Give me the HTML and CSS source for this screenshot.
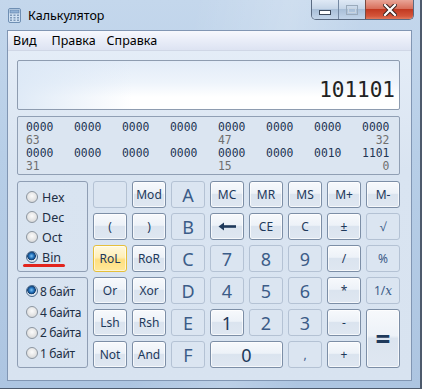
FILE: index.html
```html
<!DOCTYPE html>
<html lang="ru">
<head>
<meta charset="utf-8">
<title>Калькулятор</title>
<link rel="stylesheet" href="styles.css">
</head>
<body>
<div class="window">
  <div class="titlebar">
    <svg class="app-icon" width="14" height="15" viewBox="0 0 14 15">
      <rect x="0.5" y="0.5" width="12" height="14" rx="1.5" fill="#cfe0f2" stroke="#6f8fb3"/>
      <rect x="2" y="2" width="9" height="3" fill="#8fb0d4" stroke="#5b7ea6" stroke-width="0.6"/>
      <g fill="#7d98b8">
        <rect x="2" y="6.5" width="2" height="1.5"/><rect x="5.5" y="6.5" width="2" height="1.5"/><rect x="9" y="6.5" width="2" height="1.5"/>
        <rect x="2" y="9" width="2" height="1.5"/><rect x="5.5" y="9" width="2" height="1.5"/><rect x="9" y="9" width="2" height="1.5"/>
        <rect x="2" y="11.5" width="2" height="1.5"/><rect x="5.5" y="11.5" width="2" height="1.5"/><rect x="9" y="11.5" width="2" height="1.5"/>
      </g>
    </svg>
    <span class="title">Калькулятор</span>
    <div class="caption">
      <div class="cap cap-min">
        <svg width="12" height="5" viewBox="0 0 12 5"><rect x="0.5" y="0.5" width="11" height="4" fill="#fff" stroke="#3d4a5c"/></svg>
      </div>
      <div class="cap cap-max">
        <svg width="12" height="10" viewBox="0 0 12 10"><rect x="0.5" y="0.5" width="11" height="9" fill="none" stroke="#9aaabb"/><rect x="2.5" y="3.5" width="7" height="4" fill="none" stroke="#c9d4e0"/></svg>
      </div>
      <div class="cap cap-close">
        <svg width="14" height="12" viewBox="0 0 14 12"><path d="M2 1 L12 11 M12 1 L2 11" stroke="#3a2320" stroke-width="4.2" stroke-linecap="square"/><path d="M2 1 L12 11 M12 1 L2 11" stroke="#fff" stroke-width="2.2" stroke-linecap="square"/></svg>
      </div>
    </div>
  </div>
  <div class="client">
    <div class="menubar">
      <span class="menu-item">Вид</span>
      <span class="menu-item">Правка</span>
      <span class="menu-item">Справка</span>
    </div>
    <div class="body">
      <div class="display">101101</div>
      <div class="binary"><pre class="bits">0000   0000   0000   0000   0000   0000   0000   0000</pre><pre class="pos">63                          47                     32</pre><pre class="bits">0000   0000   0000   0000   0000   0000   0010   1101</pre><pre class="pos">31                          15                      0</pre></div>
      <div class="lower">
        <div class="panels">
          <div class="panel panel-base">
            <label class="radio"><span class="dot"></span>Hex</label>
            <label class="radio"><span class="dot"></span>Dec</label>
            <label class="radio"><span class="dot"></span>Oct</label>
            <label class="radio"><span class="dot on"></span>Bin</label>
            <span class="mark"></span>
          </div>
          <div class="panel panel-size">
            <label class="radio"><span class="dot on"></span>8 байт</label>
            <label class="radio"><span class="dot"></span>4 байта</label>
            <label class="radio"><span class="dot"></span>2 байта</label>
            <label class="radio"><span class="dot"></span>1 байт</label>
          </div>
        </div>
        <div class="keys">
          <div class="key off"></div>
          <div class="key">Mod</div>
          <div class="key off big">A</div>
          <div class="key">MC</div>
          <div class="key">MR</div>
          <div class="key">MS</div>
          <div class="key">M+</div>
          <div class="key">M-</div>

          <div class="key">(</div>
          <div class="key">)</div>
          <div class="key off big">B</div>
          <div class="key"><svg width="19" height="9" viewBox="0 0 19 9"><path d="M5 4.5 H18" stroke="#1e395b" stroke-width="2.6"/><path d="M0.5 4.5 L6 0.5 L6 8.5 Z" fill="#1e395b"/></svg></div>
          <div class="key">CE</div>
          <div class="key">C</div>
          <div class="key">±</div>
          <div class="key off">√</div>

          <div class="key hot">RoL</div>
          <div class="key">RoR</div>
          <div class="key off big">C</div>
          <div class="key off big">7</div>
          <div class="key off big">8</div>
          <div class="key off big">9</div>
          <div class="key">/</div>
          <div class="key off">%</div>

          <div class="key">Or</div>
          <div class="key">Xor</div>
          <div class="key off big">D</div>
          <div class="key off big">4</div>
          <div class="key off big">5</div>
          <div class="key off big">6</div>
          <div class="key">*</div>
          <div class="key off">1/<i class="ix">x</i></div>

          <div class="key">Lsh</div>
          <div class="key">Rsh</div>
          <div class="key off big">E</div>
          <div class="key big">1</div>
          <div class="key off big">2</div>
          <div class="key off big">3</div>
          <div class="key">-</div>
          <div class="key eq">=</div>

          <div class="key">Not</div>
          <div class="key">And</div>
          <div class="key off big">F</div>
          <div class="key big zero">0</div>
          <div class="key off">,</div>
          <div class="key">+</div>
        </div>
      </div>
    </div>
  </div>
</div>
</body>
</html>
```

FILE: styles.css
```css
* { box-sizing: border-box; }
html, body { margin: 0; padding: 0; }
body {
  width: 422px;
  height: 389px;
  overflow: hidden;
  font-family: "Noto Sans", "Open Sans", sans-serif;
  background: #fff;
}
.window {
  width: 422px;
  height: 389px;
  display: flex;
  flex-direction: column;
  padding: 0 8px 7px 7px;
  background:
    linear-gradient(100deg, rgba(255,255,255,0) 40%, rgba(255,255,255,0.18) 60%, rgba(255,255,255,0) 75%),
    linear-gradient(#c4d7ec, #b7cee7 40%, #adc5e1);
  border-right: 2px solid #4d5a6c;
  border-bottom: 1px solid #4d5a6c;
}
.titlebar {
  height: 30px;
  flex: none;
  display: flex;
  align-items: flex-start;
}
.app-icon { margin: 8px 0 0 1px; flex: none; }
.title {
  margin: 7px 0 0 6px;
  font-size: 12.5px;
  color: #000;
}
.caption {
  margin-left: auto;
  margin-right: -2px;
  display: flex;
  height: 20px;
  border: 1px solid #5a6b82;
  border-top: none;
  border-radius: 0 0 5px 5px;
  overflow: hidden;
}
.cap {
  height: 19px;
  display: flex;
  align-items: center;
  justify-content: center;
}
.cap-min {
  width: 27px;
  background: linear-gradient(#dfe9f5, #c6d6e8 45%, #a9bfd8 50%, #c3d5ea);
  border-right: 1px solid #7488a2;
  align-items: flex-end;
  padding-bottom: 4px;
}
.cap-max {
  width: 27px;
  background: linear-gradient(#dfe9f5, #c6d6e8 45%, #a9bfd8 50%, #c3d5ea);
  border-right: 1px solid #7a4a40;
}
.cap-close {
  width: 47px;
  background: linear-gradient(#e9a597, #d8705c 45%, #c23a22 50%, #d4553a 85%, #e07a5e);
}
.client {
  flex: 1;
  display: flex;
  flex-direction: column;
  border: 1px solid #8196b3;
  background: linear-gradient(#e6eef8, #d9e4f1 40%, #d8e3f0);
}
.menubar {
  height: 20px;
  flex: none;
  display: flex;
  align-items: center;
  padding-left: 5px;
  background: linear-gradient(#f7f8fd, #e9edf8 50%, #dde3f2);
  border-bottom: 1px solid #d0d7e6;
}
.menu-item {
  font-size: 12.5px;
  color: #000;
  line-height: 18px;
}
.menu-item:nth-child(1) { margin-right: 15px; }
.menu-item:nth-child(2) { margin-right: 11px; }
.body {
  flex: 1;
  padding: 9px 11px 0 9px;
  display: flex;
  flex-direction: column;
  gap: 6px;
}
.display {
  height: 50px;
  border: 1px solid #8e9cb0;
  border-radius: 2px;
  background:
    linear-gradient(90deg, rgba(220,232,246,0.9), rgba(255,255,255,0) 30%),
    linear-gradient(#e3ecf8, #eef4fb 45%, #fff 75%);
  font-family: "DejaVu Sans Mono", monospace;
  font-size: 21px;
  color: #222;
  text-align: right;
  padding: 16px 4px 0 0;
  line-height: 26px;
}
.binary {
  height: 59px;
  border: 1px solid #909fb4;
  border-radius: 2px;
  background: #dbe5f1;
  padding: 4px 0 0 8px;
}
.binary pre {
  margin: 0;
  font-family: "DejaVu Sans Mono", monospace;
  font-size: 11.4px;
  line-height: 13px;
  height: 13px;
}
.bits { color: #1f3554; }
.pos { color: #6f6f6f; }
.lower {
  display: flex;
  gap: 5px;
  height: 187px;
}
.panels {
  width: 73px;
  display: flex;
  flex-direction: column;
  gap: 5px;
}
.panel {
  position: relative;
  height: 91px;
  border: 1px solid #8f9eb4;
  border-radius: 3px;
  padding-left: 8px;
  display: flex;
  flex-direction: column;
}
.panel-base { padding-top: 5px; }
.panel-size { padding-top: 3px; }
.panel-base .radio { height: 20px; gap: 4px; font-size: 12.5px; }
.panel-size .radio { height: 20.7px; gap: 2px; font-size: 12px; letter-spacing: -0.35px; }
.radio {
  display: flex;
  align-items: center;
  color: #1e2f45;
  white-space: nowrap;
}
.dot {
  width: 12px;
  height: 12px;
  border-radius: 50%;
  border: 1px solid #8d96a0;
  background: radial-gradient(circle at 50% 40%, #fbfbfb, #e4e4e4 55%, #c9ccd0);
  flex: none;
}
.dot.on {
  border-color: #4b6a8c;
  background: radial-gradient(circle at 45% 40%, #7fc4f5 0, #1f6cb6 2.5px, #163e6c 4px, #d7e0ea 4.6px, #eef2f6 100%);
}
.mark {
  position: absolute;
  left: 5px;
  top: 82px;
  width: 42px;
  height: 3px;
  border-radius: 2px;
  background: #e2241d;
}
.keys {
  width: 307px;
  display: grid;
  grid-template-columns: repeat(8, 34px);
  grid-template-rows: repeat(6, 27px);
  gap: 5px;
}
.key {
  border: 1px solid #7c8ea6;
  border-radius: 3px;
  background: linear-gradient(#f7f9fc, #edf2f8 45%, #dbe4ef 50%, #dfe7f1);
  box-shadow: inset 0 0 0 1px rgba(255,255,255,0.7);
  display: flex;
  align-items: center;
  justify-content: center;
  font-size: 12px;
  color: #1e395b;
  line-height: 1;
}
.key.off {
  border-color: #b4c2d4;
  background: #dbe5f1;
  box-shadow: none;
  color: #3b5c88;
}
.key.big { font-size: 18px; }
.key.hot {
  border-color: #e5bf3b;
  background: linear-gradient(#fff8dc, #ffefb8 45%, #ffdf80 55%, #ffe89a);
  box-shadow: inset 0 0 0 1px rgba(255,255,255,0.6);
  color: #1e395b;
}
.key.eq {
  grid-row: span 2;
  font-size: 26px;
  font-weight: bold;
}
.key.zero { grid-column: span 2; }
.ix { font-family: "DejaVu Serif", serif; font-size: 12px; }
```
